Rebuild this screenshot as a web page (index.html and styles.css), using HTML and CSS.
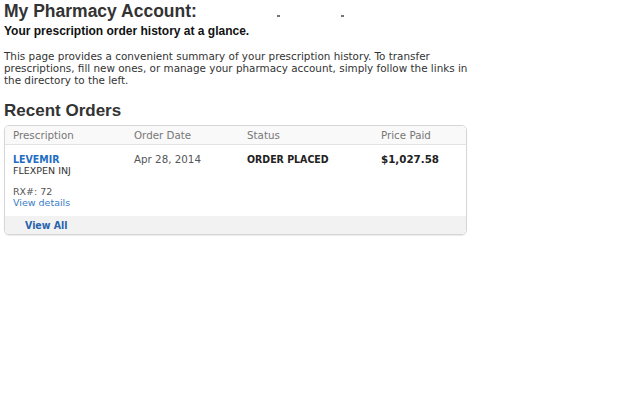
FILE: index.html
```html
<!DOCTYPE html>
<html lang="en">
<head>
  <meta charset="UTF-8" />
  <title>My Pharmacy Account</title>
  <link rel="stylesheet" href="styles.css">
</head>
<body>

  <div class="page">
    <h1>My Pharmacy Account: <span class="name"><i></i><i></i></span></h1>
    <h2 class="tagline">Your prescription order history at a glance.</h2>

    <p class="intro">This page provides a convenient summary of your prescription history. To transfer
      prescriptions, fill new ones, or manage your pharmacy account, simply follow the links in
      the directory to the left.</p>

    <h2 class="section">Recent Orders</h2>

    <div class="orders">
      <div class="orders-head">
        <div>Prescription</div>
        <div>Order Date</div>
        <div>Status</div>
        <div>Price Paid</div>
      </div>

      <div class="order-row">
        <div class="drug">
          <a class="drug-name" href="#">LEVEMIR</a>
          <div class="drug-form">FLEXPEN INJ</div>
          <div class="rx">RX#: 72</div>
          <a class="details" href="#">View details</a>
        </div>
        <div class="date">Apr 28, 2014</div>
        <div class="status">ORDER PLACED</div>
        <div class="price">$1,027.58</div>
      </div>

      <div class="orders-foot">
        <a href="#">View All</a>
      </div>
    </div>
  </div>

</body>
</html>
```

FILE: styles.css
```css
body {
  margin: 0;
  background: #fff;
  color: #333;
  font-family: 'DejaVu Sans', Verdana, sans-serif;
  font-size: 10.4px;
}

.page {
  padding: 2px 4px;
}

h1 {
  margin: 0;
  font-family: 'Liberation Sans', Arial, sans-serif;
  font-size: 17.5px;
  font-weight: bold;
  color: #333;
  line-height: 18px;
}

.name {
  display: inline-flex;
  gap: 61px;
  margin-left: 75px;
}

.name i {
  width: 3px;
  height: 2px;
  background: #777;
}

.tagline {
  margin: 4px 0 0;
  font-family: 'Liberation Sans', Arial, sans-serif;
  font-size: 12px;
  font-weight: bold;
  color: #111;
  line-height: 14px;
}

.intro {
  margin: 12px 0 0;
  width: 475px;
  line-height: 12px;
  color: #333;
}

.section {
  margin: 15px 0 0;
  font-family: 'Liberation Sans', Arial, sans-serif;
  font-size: 17px;
  font-weight: bold;
  color: #333;
  line-height: 20px;
}

.orders {
  margin-top: 4px;
  width: 461px;
  border: 1px solid #d6d6d6;
  border-radius: 5px;
  overflow: hidden;
  box-shadow: 0 1px 1px rgba(0,0,0,0.08);
}

.orders-head, .order-row {
  display: grid;
  grid-template-columns: 121px 113px 134px 1fr;
  padding-left: 8px;
}

.orders-head {
  background: #f9f9f9;
  border-bottom: 1px solid #e3e3e3;
  color: #777;
  font-size: 10.3px;
  line-height: 18px;
}

.order-row {
  padding-top: 8px;
  padding-bottom: 8px;
  font-size: 10.3px;
  line-height: 13px;
  color: #333;
}

.date {
  color: #555;
}

.drug-name {
  display: block;
  color: #1f6dc4;
  font-family: 'DejaVu Sans Condensed', 'DejaVu Sans', sans-serif;
  font-weight: bold;
  font-size: 10.5px;
  text-decoration: none;
  line-height: 12px;
}

.drug-form {
  font-size: 9.5px;
  line-height: 11px;
}

.rx {
  margin-top: 10px;
  font-size: 9.5px;
  color: #555;
  line-height: 11px;
}

.details {
  display: block;
  color: #3a7cc7;
  font-size: 9.5px;
  line-height: 11px;
  text-decoration: none;
}

.status {
  font-family: 'DejaVu Sans Condensed', 'DejaVu Sans', sans-serif;
  font-size: 10.5px;
  font-weight: bold;
  color: #222;
}

.price {
  font-weight: bold;
  color: #222;
}

.orders-foot {
  background: #f2f2f2;
  padding: 0 0 0 20px;
  line-height: 18px;
}

.orders-foot a {
  color: #2a64ad;
  font-family: 'DejaVu Sans Condensed', 'DejaVu Sans', sans-serif;
  font-weight: bold;
  font-size: 10.5px;
  text-decoration: none;
}
```
